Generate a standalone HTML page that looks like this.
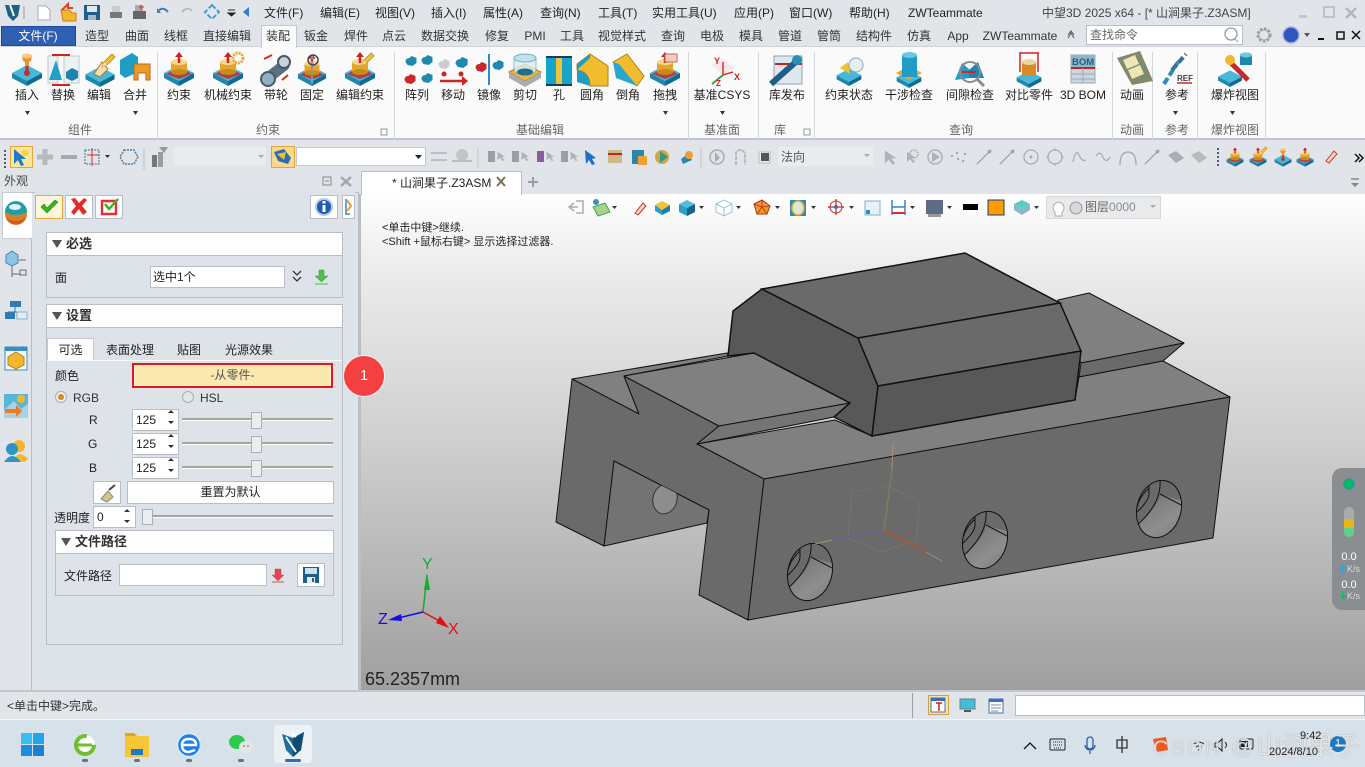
<!DOCTYPE html>
<html><head><meta charset="utf-8"><style>
*{box-sizing:border-box}
html,body{margin:0;padding:0}
body{width:1365px;height:767px;position:relative;overflow:hidden;background:#e1e5ea;font:12px/16px "Liberation Sans","Noto Sans CJK SC",sans-serif;color:#222}
div,span.t,span.c{position:absolute}
span.t,span.c{white-space:nowrap}
span.c{transform:translateX(-50%)}
.m{top:5px;font-size:12px;color:#222}
.tb{top:28px;font-size:12px;color:#333}
.rl{top:87px;font-size:12px;color:#222}
.gl{top:122px;font-size:12px;color:#666}
.sep{width:1px;background:#d3d6da;top:52px;height:88px}
.btn{background:#fdfdfd;border:1px solid #b9bec6}
.hd{background:#fdfdfd;border:1px solid #b9bec6;font-weight:bold;font-size:13px;padding-left:19px;line-height:22px;color:#333}
.hd:before{content:"";position:absolute;left:5px;top:7px;border:5px solid transparent;border-top:8px solid #555;border-bottom:0}
.box{border:1px solid #b9bec6}
.spin{background:#fff;border:1px solid #b9bec6;padding-left:3px;line-height:20px;font-size:12px}
.track{height:3px;background:#a3a5a0;border-bottom:1px solid #fff}
.thumb{background:#eceded;border:1px solid #a9afb8;width:11px;height:17px}
</style></head><body>

<!-- ribbon backgrounds -->
<div style="left:0;top:46px;width:1365px;height:94px;background:#fafafa;border-top:1px solid #cfd3d8;border-bottom:2px solid #bfc4cb"></div>
<div style="left:1265px;top:47px;width:100px;height:91px;background:#fafafa"></div>
<div class="sep" style="left:157px"></div><div class="sep" style="left:394px"></div><div class="sep" style="left:688px"></div><div class="sep" style="left:758px"></div><div class="sep" style="left:814px"></div><div class="sep" style="left:1112px"></div><div class="sep" style="left:1152px"></div><div class="sep" style="left:1197px"></div><div class="sep" style="left:1265px"></div>
<div style="left:1px;top:26px;width:75px;height:20px;background:#2f5fb3;border:1px solid #1d4a9c"></div>
<div style="left:261px;top:25px;width:36px;height:23px;background:#fafafa;border:1px solid #c4c8ce;border-bottom:0"></div>
<div style="left:1086px;top:25px;width:157px;height:20px;background:#fff;border:1px solid #b9bec6"></div>

<!-- toolbar backgrounds -->
<div style="left:10px;top:146px;width:23px;height:22px;background:#fbe49c;border:1px solid #e0a63c"></div>
<div style="left:174px;top:147px;width:92px;height:19px;background:#e9ebed"></div>
<div style="left:271px;top:146px;width:24px;height:22px;background:#fbd98a;border:1px solid #e0a63c"></div>
<div style="left:296px;top:147px;width:130px;height:19px;background:#fff;border:1px solid #c4c8ce"></div>
<div style="left:778px;top:147px;width:95px;height:19px;background:#e9ebed"></div>

<!-- left panel -->
<div style="left:31px;top:192px;width:328px;height:499px;background:#dfe3ea;border:1px solid #b9bec6"></div>
<div style="left:35px;top:191px;width:320px;height:496px;background:#dee2e9"></div>
<div style="left:2px;top:192px;width:30px;height:47px;background:#fff;border:1px solid #c8ccd2;border-right:0"></div>
<div style="left:35px;top:195px;width:28px;height:24px;background:#fdf6dc;border:1px solid #e0ab3c"></div>
<div class="btn" style="left:65px;top:195px;width:28px;height:24px"></div>
<div class="btn" style="left:95px;top:195px;width:28px;height:24px"></div>
<div class="btn" style="left:310px;top:195px;width:28px;height:24px"></div>
<div class="btn" style="left:342px;top:195px;width:13px;height:24px"></div>

<div class="hd" style="left:46px;top:232px;width:297px;height:24px">必选</div>
<div class="box" style="left:46px;top:255px;width:297px;height:43px"></div>
<span class="t" style="left:55px;top:270px;font-size:12px">面</span>
<div style="left:150px;top:266px;width:135px;height:22px;background:#fff;border:1px solid #b9bec6;padding-left:2px;line-height:20px">选中1个</div>

<div class="hd" style="left:46px;top:304px;width:297px;height:24px">设置</div>
<div class="box" style="left:46px;top:327px;width:297px;height:318px"></div>
<div style="left:47px;top:338px;width:47px;height:23px;background:#fdfdfd;border:1px solid #c4c8ce;border-bottom:0;text-align:center;line-height:22px">可选</div>
<div style="left:47px;top:360px;width:295px;height:1px;background:#fdfdfd"></div>
<span class="t" style="left:106px;top:342px">表面处理</span>
<span class="t" style="left:177px;top:342px">贴图</span>
<span class="t" style="left:225px;top:342px">光源效果</span>
<span class="t" style="left:55px;top:368px">颜色</span>
<div style="left:132px;top:363px;width:201px;height:25px;background:#faeab0;border:2px solid #e8141c;box-shadow:inset 0 0 0 1px #fdf6dc;text-align:center;line-height:21px;color:#555">-从零件-</div>
<span class="t" style="left:73px;top:390px;color:#333">RGB</span>
<span class="t" style="left:200px;top:390px;color:#333">HSL</span>
<span class="t" style="left:89px;top:412px;color:#223">R</span>
<span class="t" style="left:88px;top:436px;color:#223">G</span>
<span class="t" style="left:89px;top:460px;color:#223">B</span>
<div class="spin" style="left:132px;top:409px;width:47px;height:22px">125</div>
<div class="spin" style="left:132px;top:433px;width:47px;height:22px">125</div>
<div class="spin" style="left:132px;top:457px;width:47px;height:22px">125</div>
<div class="track" style="left:182px;top:418px;width:151px"></div><div class="thumb" style="left:251px;top:412px"></div>
<div class="track" style="left:182px;top:442px;width:151px"></div><div class="thumb" style="left:251px;top:436px"></div>
<div class="track" style="left:182px;top:466px;width:151px"></div><div class="thumb" style="left:251px;top:460px"></div>
<div class="btn" style="left:93px;top:481px;width:28px;height:23px"></div>
<div class="btn" style="left:127px;top:481px;width:207px;height:23px;text-align:center;line-height:21px">重置为默认</div>
<span class="t" style="left:54px;top:510px">透明度</span>
<div class="spin" style="left:93px;top:506px;width:43px;height:22px">0</div>
<div class="track" style="left:142px;top:515px;width:191px"></div><div class="thumb" style="left:142px;top:509px;height:16px"></div>
<div class="hd" style="left:55px;top:530px;width:279px;height:24px">文件路径</div>
<div class="box" style="left:55px;top:553px;width:279px;height:43px"></div>
<span class="t" style="left:64px;top:568px">文件路径</span>
<div style="left:119px;top:564px;width:148px;height:22px;background:#fff;border:1px solid #b9bec6"></div>
<div class="btn" style="left:297px;top:563px;width:28px;height:24px"></div>

<!-- viewport -->
<div style="left:361px;top:194px;width:1004px;height:496px;background:linear-gradient(#fff 0%,#ececec 15%,#cfcfcf 50%,#9f9f9f 100%)"></div>
<div style="left:359px;top:194px;width:2px;height:497px;background:#b9bec6"></div>
<div style="left:361px;top:171px;width:161px;height:24px;background:#fff;border:1px solid #b9bec6;border-bottom:0"></div>
<div style="left:1046px;top:196px;width:115px;height:23px;background:#e9eaeb;border:1px solid #d6d8da"></div>
<div style="left:343px;top:355px;width:42px;height:42px;border-radius:50%;background:#f44040;border:1px solid #f6f6f6;color:#fff;font-size:15px;line-height:40px;text-align:center">1</div>

<!-- status / task -->
<div style="left:0;top:690px;width:1365px;height:2px;background:#c4c8ce"></div>
<div style="left:912px;top:693px;width:1px;height:25px;background:#9aa0a6"></div>
<div style="left:928px;top:695px;width:21px;height:20px;background:#fbe49c;border:1px solid #c9a14a"></div>
<div style="left:1015px;top:695px;width:350px;height:21px;background:#fff;border:1px solid #b9bec6"></div>
<div style="left:0;top:719px;width:1365px;height:48px;background:#d6e1ea;border-top:1px solid #f4f6f8"></div>
<div style="left:274px;top:725px;width:38px;height:38px;background:#ecf1f5;border-radius:4px"></div>

<!-- all graphics -->
<svg width="1365" height="767" viewBox="0 0 1365 767" style="position:absolute;left:0;top:0" fill="none">
<defs>
<symbol id="slab" viewBox="0 0 32 34"><path d="M1 21 16 13 31 21 16 29z" fill="#47b8d8"/><path d="M1 21 16 29V34L1 26z" fill="#1f86ad"/><path d="M31 21 16 29V34L31 26z" fill="#0e6b92"/></symbol>
<symbol id="con" viewBox="0 0 32 34"><use href="#slab" width="32" height="34"/><path d="M3 22 16 15 29 22 16 27z" fill="#c8282a" opacity=".85"/><rect x="8" y="10" width="16" height="10" fill="#e5a52d"/><ellipse cx="16" cy="20" rx="8" ry="3" fill="#c98a1c"/><ellipse cx="16" cy="10" rx="8" ry="3" fill="#f6d98a"/><path d="M16 11V3" stroke="#d0201f" stroke-width="2.500"/><path d="M12 5 16 0 20 5z" fill="#d0201f"/></symbol>
<symbol id="ins" viewBox="0 0 32 34"><use href="#slab" width="32" height="34"/><path d="M16 22V12" stroke="#c8282a" stroke-width="3"/><path d="M11 4h10l-1 5-2 1v4h-4v-4l-2-1z" fill="#e8932c"/><ellipse cx="16" cy="4" rx="5" ry="2.500" fill="#f6c880"/><circle cx="16" cy="21" r="3" fill="#c8282a"/></symbol>
<symbol id="pen" viewBox="0 0 16 16"><path d="M2 14 4 9 12 1 15 4 7 12z" fill="#f2c12e" stroke="#a7741a" stroke-width=".7"/><path d="M2 14 4 9 7 12z" fill="#f4dcae"/></symbol>
<symbol id="blob" viewBox="0 0 12 10"><path d="M1 6Q1 2 5 2L7 0 12 2V7L8 10 3 9z"/></symbol>
<symbol id="sel" viewBox="0 0 14 14"><path d="M3 2 3 12 6 9 9 13 11 12 8 8 12 8z" fill="#aeb2b6"/></symbol>
<symbol id="crv" viewBox="0 0 20 20"><path d="M2 18 18 2" stroke="#9fa3a7" stroke-width="1.400"/><circle cx="16" cy="4" r="2" fill="#9fa3a7"/></symbol>
<linearGradient id="hg" x1="0" y1="0" x2="1" y2="1"><stop offset="0" stop-color="#6a6a6a"/><stop offset=".55" stop-color="#8e8e8e"/><stop offset="1" stop-color="#6c6c6c"/></linearGradient>
<clipPath id="hc"><ellipse cx="0" cy="0" rx="22" ry="29" transform="rotate(15)"/></clipPath>
<g id="hole">
<ellipse cx="0" cy="0" rx="22" ry="29" transform="rotate(15)" fill="#6a6a6a"/>
<g clip-path="url(#hc)">
<path d="M1 -15 40 -3V40H-40L-24 18Q2 -5 1 -15z" fill="url(#hg)"/>
<path d="M1 -29Q3 -5 -24 18M1 -15 24 -3M-10 -21Q-22 -10 -23 4M-10 -23V-15Q-10 -8 -23 4" stroke="#111" stroke-width="1"/>
</g>
<ellipse cx="0" cy="0" rx="22" ry="29" transform="rotate(15)" stroke="#111" stroke-width="1"/>
</g>
</defs>

<!-- QAT -->
<path d="M5 5h15l-2 11-5 5-5-5z" fill="#1d5f88"/><path d="M10 5 14 16" stroke="#fff" stroke-width="2"/><path d="M24 6V19" stroke="#999"/>
<path d="M38 6h8l4 4v10H38z" fill="#fff" stroke="#aaa"/>
<path d="M61 10h8l3 3h4v8H63z" fill="#f5b52d" stroke="#c8811a"/><path d="M62 10 68 4V8h5" stroke="#e2401d" stroke-width="2"/>
<rect x="84" y="5" width="16" height="15" fill="#1e5f88"/><rect x="87" y="6" width="10" height="6" fill="#dfe8ee"/><rect x="88" y="15" width="8" height="5" fill="#9fb9c9"/>
<path d="M110 12h12v6h-12z" fill="#777"/><path d="M112 6h8v6h-8z" fill="#ccc"/><rect x="133" y="11" width="13" height="8" fill="#666"/><path d="M135 5h8v6h-8z" fill="#aaa"/><path d="M141 5v5M139 7h5" stroke="#d33"/>
<path d="M158 11Q163 6 168 12" stroke="#4a7ea5" stroke-width="2"/><path d="M157 8v5h4z" fill="#4a7ea5"/>
<path d="M182 12Q187 6 192 11" stroke="#b9bbbd" stroke-width="2"/>
<path d="M212 5 219 12 212 19 205 12z" stroke="#4a9fd0" stroke-width="2" stroke-dasharray="5 2"/>
<path d="M228 10h7M228 13l3.500 3 3.500-3z" stroke="#222" fill="#222"/>
<path d="M249 7 243 12 249 17z" fill="#2a7fd0"/>

<!-- tab-right -->
<path d="M1068 38 1071 33 1074 38M1068 35l3-4 3 4" stroke="#555"/>
<circle cx="1231" cy="34" r="6" stroke="#999" stroke-width="1.300"/><path d="M1235 39 1238 42" stroke="#999"/>
<circle cx="1264" cy="35" r="6" stroke="#999" stroke-width="3" stroke-dasharray="2.500 1.500"/><circle cx="1264" cy="35" r="5" stroke="#aaa"/>
<circle cx="1291" cy="35" r="8" fill="#2f56b8" stroke="#9fb2e0" stroke-width="1.500"/>
<path d="M1304 33h6l-3 4z" fill="#555"/><path d="M1318 39h6" stroke="#111" stroke-width="2"/><rect x="1337" y="32" width="7" height="7" stroke="#111" stroke-width="1.500"/><path d="M1352 31 1360 39M1360 31 1352 39" stroke="#111" stroke-width="1.500"/>
<path d="M1324 7h10v10h-10z" stroke="#b3b6ba" stroke-width="1.500"/><path d="M1346 8 1356 18M1356 8 1346 18" stroke="#b3b6ba" stroke-width="2.500"/>
<rect x="1299" y="15" width="8" height="3" fill="#c4c7cb"/>

<!-- ribbon icons -->
<use href="#ins" x="11" y="52" width="32" height="34"/>
<g><path d="M48 56h10v27H48zM64 56h15v27H64z" fill="#eef0f2" stroke="#bcc"/><path d="M49 80 56 60 62 80z" fill="#22a0c5"/><path d="M66 72 72 68 78 71V78L72 81 66 78z" fill="#1c85ad"/><path d="M52 55h18M52 85h18" stroke="#d6221f" stroke-width="2"/></g>
<use href="#slab" x="84" y="54" width="32" height="33"/><path d="M94 74 102 62 108 69 100 77z" fill="#f3dfb5" stroke="#a97a2e"/><use href="#pen" x="100" y="53" width="16" height="16"/>
<path d="M120 60 132 53 138 57V72L125 78 120 74z" fill="#1f9dc5"/><path d="M134 64h16v16h-4v-7h-8v7h-4z" fill="#ec9a2a" stroke="#b86a14"/>
<use href="#con" x="163" y="52" width="32" height="34"/>
<use href="#con" x="212" y="52" width="32" height="34"/><circle cx="238" cy="58" r="5" stroke="#e8a92e" stroke-width="3" stroke-dasharray="2 1"/>
<rect x="261" y="66" width="30" height="11" rx="5" fill="#5b6f7f" transform="rotate(-38 276 71)"/><circle cx="268" cy="79" r="7" fill="#8fb0c4" stroke="#45596a" stroke-width="2"/><circle cx="284" cy="62" r="6" fill="#c9d2d9" stroke="#45596a" stroke-width="2"/><path d="M264 59 272 55M282 80 288 75" stroke="#d6301f" stroke-width="2"/>
<use href="#con" x="297" y="54" width="30" height="32"/><path d="M312 56V86" stroke="#8a97a3" stroke-width="2" stroke-dasharray="3 2"/><circle cx="313" cy="60" r="5" stroke="#445" stroke-width="1.500"/>
<use href="#con" x="344" y="52" width="32" height="34"/><use href="#pen" x="360" y="52" width="15" height="15"/>

<g fill="#1e88b0"><use href="#blob" x="404" y="56" width="13" height="10"/><use href="#blob" x="420" y="55" width="13" height="10"/><use href="#blob" x="420" y="73" width="13" height="10"/></g><g fill="#c9272a"><use href="#blob" x="403" y="74" width="13" height="10"/></g>
<g fill="#c9ccd0"><use href="#blob" x="437" y="59" width="13" height="10"/></g><g fill="#1e88b0"><use href="#blob" x="454" y="57" width="14" height="11"/></g><path d="M440 81H464" stroke="#cf2424" stroke-width="2.500"/><path d="M462 76 468 81 462 86z" fill="#cf2424"/><circle cx="444" cy="74" r="2.500" fill="#cf2424"/><circle cx="461" cy="74" r="2.500" fill="#cf2424"/>
<use href="#blob" x="474" y="62" width="13" height="10" fill="#c9272a"/><use href="#blob" x="491" y="60" width="13" height="10" fill="#1e88b0"/><path d="M489 54V85" stroke="#2a8fb8" stroke-width="2"/>
<path d="M509 72 525 64 541 72 525 81z" fill="#f2b630" stroke="#b57f18"/><path d="M509 72V78L525 87 541 78V72L525 81z" fill="#a8adb2"/><path d="M514 58V70A11 5 0 0 0 536 70V58z" fill="#d8eef5" opacity=".8" stroke="#7ab"/><ellipse cx="525" cy="58" rx="11" ry="4" fill="#bfe2ee" stroke="#7ab"/><ellipse cx="525" cy="72" rx="8" ry="3.500" fill="#1c6d95"/>
<rect x="546" y="56" width="26" height="30" fill="#18a3c8"/><rect x="556" y="56" width="6" height="30" fill="#f0c23a"/><rect x="546" y="56" width="26" height="2" fill="#0d3f66"/><rect x="546" y="84" width="26" height="2" fill="#0d3f66"/>
<path d="M577 64 590 54 608 66V86H590Q590 72 577 70z" fill="#f3bb2e" stroke="#b0821a"/><path d="M577 64 590 54 590 58 577 70V82L590 86Q590 72 577 70z" fill="#1f9dc5"/>
<path d="M613 62 627 54 644 76 637 86z" fill="#f3bb2e" stroke="#b0821a"/><path d="M613 62 619 64 637 86 616 78z" fill="#2aa8cc"/>
<use href="#con" x="649" y="52" width="32" height="34"/><path d="M665 54h12v8h-12z" fill="#f0d0b0" stroke="#b67"/>

<path d="M712 65 723 58 735 68 723 75z" fill="#f3e3e8" opacity=".8"/><path d="M723 75V62M723 75 733 72" stroke="#e23030" stroke-width="1.500"/><path d="M712 84 723 75" stroke="#3ba03b" stroke-width="2"/>
<text x="714" y="64" font-size="9" font-weight="bold" fill="#d02020" font-family="Liberation Sans">Y</text><text x="734" y="80" font-size="9" font-weight="bold" fill="#d02020" font-family="Liberation Sans">X</text><text x="716" y="86" font-size="8" font-weight="bold" fill="#d02020" font-family="Liberation Sans">Z</text>
<rect x="774" y="56" width="28" height="28" fill="#dfe8ee" stroke="#8fa2b1"/><path d="M775 64H802" stroke="#c22" stroke-width="2"/><path d="M771 84 798 60" stroke="#1e5f88" stroke-width="6"/><circle cx="797" cy="60" r="5" fill="#2a8fb8"/>
<use href="#slab" x="833" y="58" width="32" height="28"/><circle cx="856" cy="65" r="7" fill="#e6eef3" stroke="#8aa"/><path d="M840 68 848 62 850 74z" fill="#f0c030"/>
<use href="#slab" x="893" y="60" width="32" height="28"/><path d="M896 73 909 66 922 73 909 80z" fill="#f2a22e"/><rect x="902" y="55" width="15" height="22" fill="#1f9dc5"/><ellipse cx="909.500" cy="55" rx="7.500" ry="3" fill="#6cc7df"/>
<path d="M955 80 962 63 970 70V78z" fill="#1f9dc5"/><path d="M984 78 978 62 969 70V78z" fill="#1f86ad"/><circle cx="970" cy="72" r="10" stroke="#889" stroke-width="2"/><path d="M977 79 984 86" stroke="#889" stroke-width="3"/><path d="M962 72H976" stroke="#d22" stroke-width="2"/>
<use href="#slab" x="1013" y="60" width="32" height="28"/><rect x="1022" y="62" width="14" height="14" fill="#d88a2a"/><ellipse cx="1029" cy="62" rx="7" ry="3" fill="#ecd7a8"/><path d="M1019 53H1039M1020 53V72M1038 53V72" stroke="#cf2424" stroke-width="1.500"/>
<rect x="1071" y="55" width="24" height="28" fill="#cbd6de" stroke="#9ab"/><rect x="1071" y="55" width="24" height="12" fill="#8fb3c9"/><text x="1072" y="65" font-size="9.500" font-weight="bold" fill="#1f5f88" font-family="Liberation Sans">BOM</text><path d="M1071 68H1095" stroke="#c22" stroke-width="2"/><path d="M1071 74H1095M1071 79H1095M1083 68V83" stroke="#9ab"/>
<path d="M1117 58 1140 51 1153 81 1132 85z" fill="#7f8a6a"/><path d="M1123 60 1135 55 1139 64 1127 69zM1128 70 1140 65 1144 74 1132 79z" fill="#efe6b8"/>
<path d="M1164 84 1178 62" stroke="#2a8fb8" stroke-width="4" stroke-dasharray="7 3"/><path d="M1172 70 1186 54" stroke="#3a6e94" stroke-width="4" stroke-dasharray="7 3"/><text x="1177" y="81" font-size="8" font-weight="bold" fill="#345" font-family="Liberation Sans">REF</text><path d="M1177 83H1192" stroke="#d6221f" stroke-width="1.500"/>
<use href="#slab" x="1215" y="60" width="30" height="27"/><path d="M1231 63 1248 80" stroke="#c8282a" stroke-width="5"/><circle cx="1230" cy="60" r="5" fill="#f3b72e"/><rect x="1240" y="55" width="12" height="10" fill="#1f86ad"/><ellipse cx="1246" cy="55" rx="6" ry="2.500" fill="#6cc7df"/>
<g fill="#333"><path d="M25 111h5l-2.500 4z"/><path d="M133 111h5l-2.500 4z"/><path d="M663 111h5l-2.500 4z"/><path d="M720 111h5l-2.500 4z"/><path d="M1173 111h5l-2.500 4z"/><path d="M1230 111h5l-2.500 4z"/></g>
<rect x="381" y="129" width="6" height="6" stroke="#999"/><rect x="804" y="129" width="6" height="6" stroke="#999"/>

<!-- toolbar -->
<path d="M5 150V168" stroke="#556" stroke-width="2" stroke-dasharray="2 2"/>
<path d="M14 149 14 164 18 160 21 166 24 165 21 159 26 159z" fill="#1f78c8"/><circle cx="25" cy="153" r="3.500" fill="#f6d34d"/>
<path d="M45 149V165M37 157H53" stroke="#b7babd" stroke-width="5"/><path d="M61 157H77" stroke="#a6a9ad" stroke-width="4"/>
<rect x="85" y="150" width="14" height="14" stroke="#3a6ea0" stroke-dasharray="2 1"/><path d="M92 148V166M87 155H99" stroke="#d83030"/><path d="M105 155h5l-2.500 3z" fill="#333"/>
<path d="M124 150h10l4 7-4 7h-10l-4-7z" stroke="#4c82aa" stroke-width="1.500" stroke-dasharray="2 1"/>
<path d="M144 148V170" stroke="#bcc0c5"/><rect x="152" y="155" width="5" height="12" fill="#777"/><rect x="158" y="152" width="5" height="15" fill="#9a9da0"/><path d="M159 147h9l-4 6z" fill="#999"/>
<path d="M258 155h6l-3 3z" fill="#aaa"/>
<path d="M274 152 284 149 291 158 288 164 278 161z" fill="#2c6fb0"/><path d="M277 154 286 152 284 160z" fill="#f0c030"/>
<path d="M415 155h7l-3.500 4z" fill="#222"/>
<g stroke="#aeb1b5" stroke-width="1.500"><path d="M431 153H447M431 160H447"/><path d="M452 161H472"/></g><circle cx="462" cy="155" r="6" fill="#c2c4c7"/>
<path d="M478 148V168M701 148V168" stroke="#c2c5c9"/>
<g fill="#9b9ea2"><rect x="488" y="151" width="7" height="11"/><rect x="512" y="151" width="7" height="11"/><rect x="561" y="151" width="7" height="11"/></g><rect x="537" y="151" width="7" height="11" fill="#8a5d9c"/>
<use href="#sel" x="495" y="150" width="12" height="12"/><use href="#sel" x="519" y="150" width="12" height="12"/><use href="#sel" x="544" y="150" width="12" height="12"/><use href="#sel" x="568" y="150" width="12" height="12"/>
<path d="M585 150 586 164 589 160 592 165 595 164 592 159 596 158z" fill="#1e70c8"/>
<rect x="608" y="150" width="14" height="13" fill="#cdbb85"/><path d="M608 154H622" stroke="#c22" stroke-width="2"/>
<rect x="632" y="150" width="12" height="14" fill="#2c86ad"/><rect x="638" y="156" width="9" height="9" fill="#f0a030"/>
<circle cx="662" cy="157" r="7" fill="#d9a243"/><path d="M660 151 668 157 660 163z" fill="#2a9c8c"/>
<path d="M681 159 688 154 692 160 683 164z" fill="#2c86ad"/><circle cx="689" cy="155" r="4" fill="#f0a030"/>
<circle cx="717" cy="157" r="7" stroke="#a9acb0" stroke-width="1.500"/><path d="M715 152 715 162 720 158z" fill="#a9acb0"/>
<path d="M736 165V152L739 150H742L745 153V165" stroke="#a9acb0" stroke-width="1.500" stroke-dasharray="4 1"/>
<rect x="759" y="152" width="11" height="11" fill="#eee" stroke="#b9bcc0"/><rect x="761" y="153" width="8" height="8" fill="#555"/>
<path d="M864 154h6l-3 3z" fill="#aaa"/>
<use href="#sel" x="881" y="148" width="18" height="18"/><use href="#sel" x="904" y="150" width="14" height="14"/><circle cx="914" cy="154" r="4" stroke="#b0b3b7" stroke-width="2" stroke-dasharray="1.500 1"/>
<circle cx="935" cy="157" r="7" stroke="#aeb1b5" stroke-width="1.500"/><path d="M932 152 932 162 940 157z" fill="#aeb1b5"/>
<g fill="#a5a8ac"><circle cx="952" cy="156" r="1.200"/><circle cx="957" cy="153" r="1.200"/><circle cx="958" cy="159" r="1.200"/><circle cx="963" cy="161" r="1.200"/><circle cx="965" cy="154" r="1.200"/></g>
<use href="#crv" x="975" y="148" width="18" height="18"/><use href="#crv" x="998" y="148" width="18" height="18"/>
<circle cx="1031" cy="157" r="7" stroke="#a9acb0" stroke-width="1.300"/><circle cx="1031" cy="157" r="1.500" fill="#a9acb0"/>
<circle cx="1055" cy="157" r="7" stroke="#a9acb0" stroke-width="1.300"/><path d="M1055 148V151M1055 163V166M1046 157H1049M1061 157H1064" stroke="#a9acb0"/>
<path d="M1073 162Q1076 148 1079 155T1086 160" stroke="#a9acb0" stroke-width="1.300"/><path d="M1096 156Q1100 150 1103 157T1110 157" stroke="#a9acb0" stroke-width="1.300"/><path d="M1120 165Q1120 152 1128 152T1136 165" stroke="#a9acb0" stroke-width="1.500"/>
<use href="#crv" x="1143" y="148" width="18" height="18"/>
<path d="M1168 155 1176 151 1184 158 1176 163z" fill="#a9acb0"/><path d="M1191 155 1199 151 1207 158 1199 163z" fill="#b7babd"/>
<path d="M1218 148V168" stroke="#4a5a8a" stroke-width="2" stroke-dasharray="2 2"/>
<use href="#con" x="1226" y="147" width="18" height="20"/><use href="#con" x="1249" y="147" width="18" height="20"/><use href="#pen" x="1258" y="146" width="10" height="10"/><use href="#ins" x="1274" y="147" width="18" height="20"/><use href="#con" x="1296" y="147" width="18" height="20"/>
<path d="M1326 161 1334 151 1337 154 1329 163z" fill="#f1d8c0" stroke="#c33"/>
<path d="M1355 154 1359 158 1355 162M1359 154 1363 158 1359 162" stroke="#111" stroke-width="1.500"/>
<path d="M1351 179H1359" stroke="#888" stroke-width="1.500"/><path d="M1351 183h8l-4 4z" fill="#888"/>

<!-- panel title btns -->
<rect x="323" y="177" width="8" height="8" stroke="#888"/><path d="M325 181H329" stroke="#888"/><path d="M341 177 351 186M351 177 341 186" stroke="#a2a6ab" stroke-width="2.500"/>
<!-- panel side icons -->
<circle cx="16" cy="214" r="11" fill="#d98024"/><path d="M5 212A11 11 0 0 1 27 212Q16 218 5 212z" fill="#1fa0a8"/><path d="M6 218Q16 224 26 218A11 11 0 0 1 6 218z" fill="#ce5a22"/><ellipse cx="15" cy="207" rx="6" ry="3" fill="#dfeff3"/>
<path d="M6 255 12 251 18 255V263L12 266 6 263z" fill="#8cc4e2" stroke="#4a88ad"/><path d="M12 266V274H20M12 273V277M19 260H26" stroke="#667"/><rect x="20" y="270" width="6" height="5" stroke="#667"/>
<rect x="10" y="301" width="11" height="6" fill="#2f7bb3"/><path d="M15 307V312M8 312H23" stroke="#2f7bb3"/><rect x="5" y="312" width="10" height="7" fill="#2f7bb3"/><rect x="17" y="312" width="10" height="7" fill="#e4edf2" stroke="#7fb0cc"/>
<rect x="5" y="347" width="22" height="23" fill="#f4f6f8" stroke="#3b8dbd"/><rect x="5" y="347" width="22" height="4" fill="#3b8dbd"/><path d="M16 352 24 357V365L16 369 8 365V357z" fill="#f3b72e" stroke="#b57f18"/>
<rect x="4" y="394" width="24" height="24" fill="#57b7d8"/><path d="M4 410 14 401 21 409 28 404V418H4z" fill="#a9d2df"/><circle cx="21" cy="399" r="4" fill="#f3b72e"/><path d="M5 409H16V405L22 411 16 417V413H5z" fill="#ee7a26"/>
<circle cx="19" cy="446" r="6" fill="#f3b72e"/><path d="M13 460Q19 449 28 459L24 462z" fill="#f3b72e"/><circle cx="12" cy="449" r="6" fill="#2e93c6"/><path d="M4 462Q12 450 21 462z" fill="#2e93c6"/>
<!-- panel btn icons -->
<path d="M41 207 47 213 58 202 55 200 47 208 44 204z" fill="#35b41f" stroke="#2a8f18" stroke-width=".6"/>
<path d="M71 199 75 198 79 203 84 198 87 200 82 206 87 212 83 215 79 209 74 215 71 212 76 206z" fill="#e32a24"/>
<path d="M102 201H116V214H102z" stroke="#e23030" stroke-width="2.400"/><path d="M105 204 109 209 118 199" stroke="#35b41f" stroke-width="2.400"/>
<circle cx="324" cy="207" r="8" fill="#1e5cb3" stroke="#b6c9e4" stroke-width="2"/><rect x="322.500" y="205" width="3" height="7" fill="#fff"/><rect x="322.500" y="201" width="3" height="2.500" fill="#fff"/>
<path d="M346 199V214H350" stroke="#2a8fd0" stroke-width="1.500"/><path d="M347 200 351 206 347 211" stroke="#ee9a2a" stroke-width="2"/>
<path d="M293 271 297 275 301 271M293 277 297 281 301 277" stroke="#333" stroke-width="1.300"/>
<path d="M319 270H324V276H328L321.500 282 315 276H319z" fill="#4fbf4c" stroke="#3f9f3c" stroke-width=".5"/><path d="M315 284H328" stroke="#4fbf4c"/>
<circle cx="61" cy="397" r="5.500" fill="#eceef0" stroke="#a9adb2"/><circle cx="61" cy="397" r="3" fill="#d9852a"/>
<circle cx="188" cy="397" r="5.500" fill="#e4e6e8" stroke="#a9adb2"/>
<g fill="#333"><path d="M168 413 171 410 174 413zM168 421 171 424 174 421z"/><path d="M168 437 171 434 174 437zM168 445 171 448 174 445z"/><path d="M168 461 171 458 174 461zM168 469 171 472 174 469z"/><path d="M124 512 127 509 130 512zM124 520 127 523 130 520z"/></g>
<path d="M101 499 108 491 113 497 107 502z" fill="#d2c68a" stroke="#887"/><path d="M109 490 115 485" stroke="#445" stroke-width="2"/>
<path d="M275 569H281V575H284L278 581 272 575H275z" fill="#e8405a" stroke="#b55" stroke-width=".5"/><path d="M272 582H284" stroke="#b55"/>
<rect x="303" y="567" width="16" height="16" fill="#1e5f88"/><rect x="305" y="568" width="12" height="6" fill="#cfe0ea"/><rect x="307" y="577" width="8" height="6" fill="#e5ebef"/><rect x="312" y="578" width="2" height="4" fill="#1e5f88"/>

<!-- tab -->
<path d="M497 177 505 186M505 177 497 186" stroke="#7b6f56" stroke-width="2"/><path d="M533 177V187M528 182H538" stroke="#9a9da1" stroke-width="2"/>

<!-- view toolbar -->
<path d="M569 207H578M574 203 569 207 574 211" stroke="#a9acb0" stroke-width="1.500"/><path d="M576 201H583V213H576" stroke="#a9acb0" stroke-width="1.500"/>
<path d="M593 207 605 203 610 212 598 216z" fill="#a8d28b" stroke="#4aa64a"/><circle cx="596" cy="202" r="3" fill="#3b8dbd"/>
<path d="M635 213 643 203 646 206 638 215z" fill="#f1d8c0" stroke="#c33"/>
<path d="M655 205 662 201 670 205 662 210z" fill="#f2c23a"/><path d="M655 205 662 210V215L655 211z" fill="#2aa0c8"/><path d="M670 205 662 210V215L670 211z" fill="#1b7da5"/>
<path d="M679 204 687 200 695 204 687 208z" fill="#53bde0"/><path d="M679 204 687 208V216L679 212z" fill="#2a9fc9"/><path d="M695 204 687 208V216L695 212z" fill="#11658c"/>
<path d="M716 204 724 200 732 204V212L724 216 716 212z" stroke="#96c3d8" fill="#fff"/><path d="M716 204 724 208 732 204M724 208V216" stroke="#96c3d8"/>
<path d="M754 204 762 200 770 206 767 214 757 214z" fill="#f09a24" stroke="#b3301e"/><path d="M762 200 762 207 754 204M762 207 770 206M762 207 767 214M762 207 757 214" stroke="#b3301e" stroke-width=".8"/>
<rect x="790" y="200" width="16" height="16" fill="#2e8bb5"/><ellipse cx="798" cy="208" rx="6" ry="7" fill="#dfe7da" stroke="#e3b02e" stroke-width="1.500"/>
<circle cx="836" cy="207" r="6" stroke="#d03030"/><path d="M828 207H844M836 199V215" stroke="#c22" stroke-width="1.200"/><circle cx="836" cy="207" r="2" fill="#3574c0"/>
<rect x="865" y="201" width="15" height="14" fill="#e8f1f5" stroke="#7bb0cc"/><rect x="866" y="210" width="4" height="4" fill="#2e8bb5"/>
<path d="M892 200V215M905 200V215M892 207H905" stroke="#3a87b8" stroke-width="1.500"/><path d="M892 213H905" stroke="#d83030" stroke-width="2"/>
<rect x="926" y="200" width="17" height="14" fill="#5d6b85"/><rect x="928" y="214" width="13" height="3" fill="#999"/>
<rect x="963" y="204" width="15" height="6" fill="#000"/>
<rect x="988" y="200" width="16" height="15" fill="#ff9a00" stroke="#12407a"/>
<path d="M1014 204 1022 200 1030 204 1022 209z" fill="#55d0c0"/><path d="M1014 204V210L1022 215 1030 210V204L1022 209z" fill="#8ab6cc"/>
<g fill="#333"><path d="M612 206h5l-2.500 3z"/><path d="M699 206h5l-2.500 3z"/><path d="M736 206h5l-2.500 3z"/><path d="M775 206h5l-2.500 3z"/><path d="M811 206h5l-2.500 3z"/><path d="M849 206h5l-2.500 3z"/><path d="M910 206h5l-2.500 3z"/><path d="M947 206h5l-2.500 3z"/><path d="M1034 206h5l-2.500 3z"/></g>
<path d="M1055 212A5.500 5.500 0 1 1 1062 212V216H1055z" fill="#fff" stroke="#aaa"/><circle cx="1076" cy="208" r="6" fill="#d6d8da" stroke="#999"/><path d="M1150 205h6l-3 3z" fill="#aaa"/>

<!-- MODEL -->
<g stroke="#111" stroke-width="1" stroke-linejoin="round">
<path d="M1058 300 1089 293 1184 343 1081 363z" fill="#808080"/>
<path d="M1184 343 1163 361 1079 377 1081 363z" fill="#6a6a6a"/>
<path d="M1163 361 1230 397 764 479 697 444 835 420 872 436 1075 400 1079 377z" fill="#808080"/>
<path d="M572 379 727 353 728 356 624 376 639 414z" fill="#808080"/>
<path d="M572 379 639 414 624 376 719 426 697 444 764 479 748 620 699 595 709 510 614 461 604 546 556 522z" fill="#6a6a6a"/>
<path d="M604 546 707 523 709 510 614 461z" fill="#737373"/>
<path d="M624 376 754 353 850 403 719 426z" fill="#808080"/>
<path d="M719 426 850 403 834 417 697 444z" fill="#747474"/>
<path d="M764 479 1230 397 1213 538 748 620z" fill="#6a6a6a"/>
</g>
<!-- back hole -->
<clipPath id="bh"><path d="M614 461 709 510 707 523 604 546z"/></clipPath>
<g clip-path="url(#bh)"><ellipse cx="665" cy="499" rx="12" ry="15" transform="rotate(15 665 499)" fill="#8d8d8d" stroke="#222" stroke-width=".8"/></g>
<!-- holes -->
<use href="#hole" transform="translate(810 572)"/><use href="#hole" transform="translate(985 540)"/><use href="#hole" transform="translate(1159 509)"/>
<g stroke="#111" stroke-width="1.500" stroke-linejoin="miter">
<path d="M762 289 858 338 878 386 872 436 834 417 850 403 754 353 728 356 733 311z" fill="#585858"/>
<path d="M762 289 965 253 1060 303 858 338z" fill="#6a6a6a"/>
<path d="M858 338 1060 303 1081 351 878 386z" fill="#6a6a6a"/>
<path d="M878 386 1081 351 1075 400 872 436z" fill="#585858"/>
</g>
<!-- center triad -->
<g fill="none">
<path d="M852 492 888 486 919 502 917 540 881 552 848 538z" stroke="#8f7a5c" stroke-width=".6" opacity=".8"/>
<path d="M884 530 892 470" stroke="#6f8a62" stroke-width="1.200"/><path d="M892 470 893 443" stroke="#a59278"/>
<path d="M884 530 832 540" stroke="#67668f" stroke-width="2"/><path d="M832 540 815 544" stroke="#a59278"/>
<path d="M884 530 926 552" stroke="#a5573e" stroke-width="2"/><path d="M926 552 942 561" stroke="#a59278"/>
</g>
<!-- axes -->
<path d="M423 612 427 575" stroke="#10b030" stroke-width="1.500"/><path d="M424 590 427 573 430 590z" fill="#10b030"/>
<path d="M423 612 394 619" stroke="#1010e0" stroke-width="1.500"/><path d="M401 614 388 620 402 621z" fill="#1010e0"/>
<path d="M423 612 445 624" stroke="#e01010" stroke-width="1.500"/><path d="M436 623 449 628 440 616z" fill="#e01010"/>

<!-- netspeed -->
<path d="M1365 468H1342A10 10 0 0 0 1332 478V600A10 10 0 0 0 1342 610H1365z" fill="#8b8e91"/>
<circle cx="1349" cy="484" r="5.500" fill="#00b86a" stroke="#4f7fb5" stroke-width=".6"/>
<rect x="1344" y="507" width="10" height="30" rx="5" fill="#a9abad"/><path d="M1344 519H1354V532A5 5 0 0 1 1344 532z" fill="#e0b81c"/><path d="M1344 528H1354V532A5 5 0 0 1 1344 532z" fill="#5fcf8f"/>
<path d="M1340 569 1343 566 1346 569M1343 566V573" stroke="#1fa8ee" stroke-width="1.500"/><path d="M1340 595 1343 598 1346 595M1343 598V591" stroke="#00c060" stroke-width="1.500"/>

<!-- status icons -->
<rect x="931" y="698" width="14" height="14" fill="#fff" stroke="#3a6fc0"/><rect x="931" y="698" width="14" height="3" fill="#3a6fc0"/><path d="M936 703H942M939 703V711" stroke="#c22" stroke-width="1.500"/>
<rect x="960" y="699" width="15" height="10" fill="#3fc0d8" stroke="#778"/><rect x="964" y="710" width="7" height="2" fill="#555"/>
<rect x="989" y="699" width="14" height="14" fill="#fff" stroke="#3a6fc0"/><rect x="989" y="699" width="14" height="3" fill="#3a6fc0"/><path d="M991 705H1001M991 708H1001M991 711H998" stroke="#889"/>

<!-- taskbar -->
<rect x="21" y="733" width="11" height="11" fill="#35c0f5"/><rect x="33" y="733" width="11" height="11" fill="#1fa5ea"/><rect x="21" y="745" width="11" height="11" fill="#1c8fdc"/><rect x="33" y="745" width="11" height="11" fill="#1c7fd0"/>
<circle cx="85" cy="745" r="10" fill="#fff"/><circle cx="85" cy="745" r="9" stroke="#6ebe2e" stroke-width="4" stroke-dasharray="44 12"/><path d="M78 745H92" stroke="#6ebe2e" stroke-width="3"/>
<path d="M125 733H134L137 736H149V757H125z" fill="#f8c534"/><path d="M125 733H134L137 736H125z" fill="#e6a31a"/><rect x="131" y="749" width="12" height="6" fill="#1f78c8"/>
<circle cx="189" cy="745" r="11.500" fill="#1f7ff0" stroke="#d5eefb" stroke-width="1.500"/><path d="M182 745H196Q196 739 189 739T182 745ZM182 745Q182 752 189 752L195 750" stroke="#fff" stroke-width="2.500"/>
<ellipse cx="237" cy="742" rx="8" ry="7" fill="#2dc84d"/><ellipse cx="246" cy="747" rx="7" ry="6" fill="#e6e6e6"/><circle cx="244" cy="746" r="1" fill="#999"/><circle cx="248" cy="746" r="1" fill="#999"/>
<path d="M282 734 293 738 304 732 301 750 293 757 286 750z" fill="#1b6f9a"/><path d="M293 738V757L301 750 304 732z" fill="#0f4a70"/><path d="M286 737 296 752M292 733 296 737" stroke="#fff" stroke-width="2"/>
<g fill="#6c7378"><rect x="82" y="759" width="6" height="3" rx="1.500"/><rect x="134" y="759" width="6" height="3" rx="1.500"/><rect x="186" y="759" width="6" height="3" rx="1.500"/><rect x="238" y="759" width="6" height="3" rx="1.500"/></g>
<rect x="285" y="759" width="16" height="3" rx="1.500" fill="#2a6fb8"/>
<path d="M1024 749 1030 743 1036 749" stroke="#111" stroke-width="1.300"/>
<rect x="1050" y="739" width="15" height="11" rx="1" stroke="#222"/><path d="M1053 742H1062M1053 745H1062M1054 748H1061" stroke="#222" stroke-dasharray="1 1"/>
<rect x="1087" y="737" width="6" height="12" rx="3" stroke="#2f5ea8" stroke-width="1.300"/><path d="M1085 745A5 5 0 0 0 1095 745M1090 751V754" stroke="#2f5ea8" stroke-width="1.300"/>
<path d="M1117 740H1127V748H1117zM1122 736V753" stroke="#333" stroke-width="1.300"/>
<path d="M1153 739 1166 737 1168 750 1156 752z" fill="#f1581f"/>
<path d="M1194 744A8 8 0 0 1 1204 744M1196 747A5 5 0 0 1 1202 747" stroke="#222"/><circle cx="1199" cy="750" r="1" fill="#222"/>
<path d="M1215 743H1218L1222 739V751L1218 747H1215z" stroke="#222"/><path d="M1225 742Q1228 745 1225 748" stroke="#222"/>
<rect x="1240" y="739" width="13" height="10" rx="1.500" stroke="#222"/><rect x="1241" y="741" width="7" height="6" fill="#222"/>
<circle cx="1338" cy="744" r="8" fill="#1f78c0"/>
</svg>

<!-- QAT/menu text -->
<span class="t m" style="left:264px">文件(F)</span><span class="t m" style="left:320px">编辑(E)</span><span class="t m" style="left:375px">视图(V)</span><span class="t m" style="left:431px">插入(I)</span><span class="t m" style="left:483px">属性(A)</span><span class="t m" style="left:540px">查询(N)</span><span class="t m" style="left:598px">工具(T)</span><span class="t m" style="left:652px">实用工具(U)</span><span class="t m" style="left:734px">应用(P)</span><span class="t m" style="left:789px">窗口(W)</span><span class="t m" style="left:849px">帮助(H)</span><span class="t m" style="left:908px">ZWTeammate</span>
<span class="t m" style="left:1042px;color:#444">中望3D 2025 x64 - [* 山涧果子.Z3ASM]</span>

<span class="c tb" style="left:38px;color:#fff">文件(F)</span>
<span class="c tb" style="left:97px">造型</span><span class="c tb" style="left:137px">曲面</span><span class="c tb" style="left:176px">线框</span><span class="c tb" style="left:227px">直接编辑</span><span class="c tb" style="left:278px">装配</span><span class="c tb" style="left:316px">钣金</span><span class="c tb" style="left:356px">焊件</span><span class="c tb" style="left:394px">点云</span><span class="c tb" style="left:445px">数据交换</span><span class="c tb" style="left:497px">修复</span><span class="c tb" style="left:535px">PMI</span><span class="c tb" style="left:572px">工具</span><span class="c tb" style="left:622px">视觉样式</span><span class="c tb" style="left:673px">查询</span><span class="c tb" style="left:712px">电极</span><span class="c tb" style="left:751px">模具</span><span class="c tb" style="left:790px">管道</span><span class="c tb" style="left:829px">管筒</span><span class="c tb" style="left:874px">结构件</span><span class="c tb" style="left:919px">仿真</span><span class="c tb" style="left:958px">App</span><span class="c tb" style="left:1020px">ZWTeammate</span>
<span class="t" style="left:1090px;top:27px;color:#666">查找命令</span>

<span class="c rl" style="left:27px">插入</span><span class="c rl" style="left:63px">替换</span><span class="c rl" style="left:99px">编辑</span><span class="c rl" style="left:135px">合并</span><span class="c rl" style="left:179px">约束</span><span class="c rl" style="left:228px">机械约束</span><span class="c rl" style="left:276px">带轮</span><span class="c rl" style="left:312px">固定</span><span class="c rl" style="left:360px">编辑约束</span><span class="c rl" style="left:417px">阵列</span><span class="c rl" style="left:453px">移动</span><span class="c rl" style="left:489px">镜像</span><span class="c rl" style="left:525px">剪切</span><span class="c rl" style="left:559px">孔</span><span class="c rl" style="left:592px">圆角</span><span class="c rl" style="left:628px">倒角</span><span class="c rl" style="left:665px">拖拽</span><span class="c rl" style="left:722px">基准CSYS</span><span class="c rl" style="left:787px">库发布</span><span class="c rl" style="left:849px">约束状态</span><span class="c rl" style="left:909px">干涉检查</span><span class="c rl" style="left:970px">间隙检查</span><span class="c rl" style="left:1029px">对比零件</span><span class="c rl" style="left:1083px">3D BOM</span><span class="c rl" style="left:1132px">动画</span><span class="c rl" style="left:1177px">参考</span><span class="c rl" style="left:1235px">爆炸视图</span>
<span class="c gl" style="left:80px">组件</span><span class="c gl" style="left:268px">约束</span><span class="c gl" style="left:540px">基础编辑</span><span class="c gl" style="left:722px">基准面</span><span class="c gl" style="left:780px">库</span><span class="c gl" style="left:961px">查询</span><span class="c gl" style="left:1132px">动画</span><span class="c gl" style="left:1177px">参考</span><span class="c gl" style="left:1235px">爆炸视图</span>

<span class="t" style="left:781px;top:149px;color:#555">法向</span>
<span class="t" style="left:4px;top:173px;color:#444">外观</span>
<span class="t" style="left:392px;top:175px">* 山涧果子.Z3ASM</span>
<span class="t" style="left:382px;top:221px;font-size:11px;line-height:14px;color:#222">&lt;单击中键&gt;继续.<br>&lt;Shift +鼠标右键&gt; 显示选择过滤器.</span>
<span class="t" style="left:365px;top:669px;font-size:18px;line-height:20px;color:#222">65.2357mm</span>
<span class="t" style="left:422px;top:557px;font-size:16px;color:#10b030">Y</span>
<span class="t" style="left:378px;top:612px;font-size:16px;color:#1010e0">Z</span>
<span class="t" style="left:448px;top:622px;font-size:16px;color:#e01010">X</span>
<span class="t" style="left:1085px;top:199px;color:#666">图层<span style="color:#8a8f95">0000</span></span>
<span class="c" style="left:1349px;top:550px;color:#fff;font-size:11px;line-height:14px">0.0</span><span class="t" style="left:1347px;top:563px;color:#ddd;font-size:9px;line-height:12px">K/s</span>
<span class="c" style="left:1349px;top:578px;color:#fff;font-size:11px;line-height:14px">0.0</span><span class="t" style="left:1347px;top:590px;color:#ddd;font-size:9px;line-height:12px">K/s</span>
<span class="t" style="left:7px;top:698px;color:#333">&lt;单击中键&gt;完成。</span>
<span class="t" style="left:1153px;top:736px;color:rgba(255,255,255,.72);font-size:21px;line-height:26px;letter-spacing:2.500px;text-shadow:0 0 1px #888">CSDN</span>
<span class="t" style="left:1231px;top:734px;color:rgba(255,255,255,.72);font-size:22px;line-height:26px;text-shadow:0 0 1px #888">@</span>
<span class="t" style="left:1256px;top:732px;color:rgba(255,255,255,.72);font-size:26px;line-height:28px;text-shadow:0 0 1px #888">山涧果子</span>
<span class="t" style="left:1300px;top:728px;color:#222;font-size:11px">9:42</span>
<span class="t" style="left:1269px;top:744px;color:#222;font-size:11px">2024/8/10</span>
<span class="c" style="left:1338px;top:737px;color:#fff;font-size:10px;line-height:14px">1</span>
</body></html>
